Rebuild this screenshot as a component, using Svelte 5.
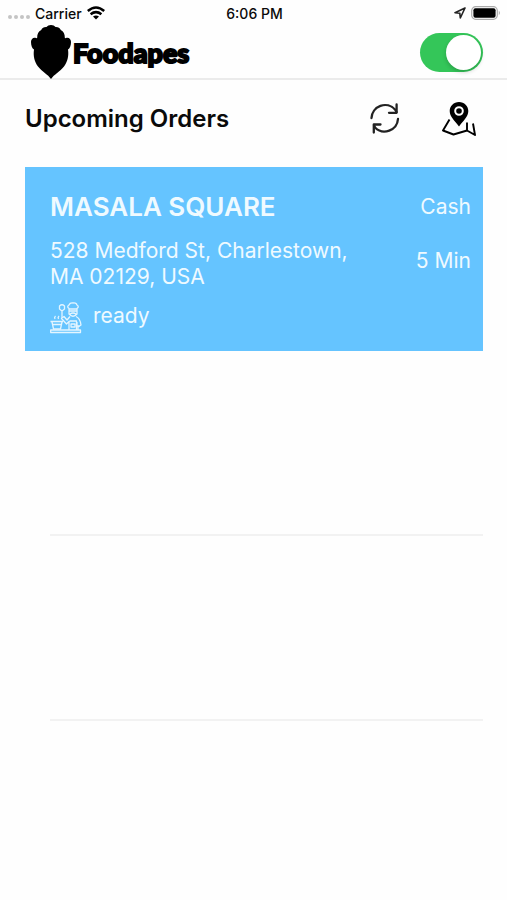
<script>
  let online = $state(true);

  const orders = [
    {
      id: 1,
      name: "MASALA SQUARE",
      address: "528 Medford St, Charlestown, MA 02129, USA",
      status: "ready",
      payment: "Cash",
      eta: "5 Min",
    },
  ];

  // empty table rows below the last order
  const emptyRows = [1, 2];
</script>

<div class="status-bar">
  <div class="carrier">
    <span class="dots"><i></i><i></i><i></i><i></i></span>
    <span>Carrier</span>
    <svg width="18" height="14" viewBox="0 0 18 14" aria-hidden="true">
      <g fill="none" stroke="#000" stroke-width="2.5">
        <path d="M0.8 5Q9-2 17.2 5" />
        <path d="M3.6 8.3Q9 4 14.4 8.3" />
      </g>
      <path d="M9 13.6L6 10.6Q9 8.4 12 10.6Z" />
    </svg>
  </div>
  <span class="time">6:06 PM</span>
  <div class="indicators">
    <svg width="12" height="12" viewBox="0 0 12 12" aria-hidden="true">
      <path
        d="M11 1L1 5.7L5.8 6.2L6.3 11Z"
        fill="none"
        stroke="#222"
        stroke-width="1.6"
        stroke-linejoin="round"
      />
    </svg>
    <svg width="30" height="14" viewBox="0 0 30 14" aria-hidden="true">
      <rect x="0.7" y="0.7" width="25.6" height="12.6" rx="4" fill="#fff" stroke="#aaa" stroke-width="1.2" />
      <rect x="2.4" y="2.2" width="22.2" height="9.6" rx="2" />
      <path d="M27.8 4.8Q30 7 27.8 9.2Z" fill="#aaa" />
    </svg>
  </div>
</div>

<header>
  <div class="logo">
    <svg width="42" height="54" viewBox="0 0 42 54" aria-hidden="true">
      <path
        d="M21 0C23 0 24.5 0.8 25.5 2C28 1.8 30 3 30.8 5C33.5 6.5 35 9 34.8 12.8L35.6 13.2C38.5 12 41 13.8 41 17C41 20.5 39.8 23.5 38 24.5C39 31 37.5 37 34 41.5C30 46.5 24 49.5 21 54C18 49.5 12 46.5 8 41.5C4.5 37 3 31 4 24.5C2.2 23.5 1 20.5 1 17C1 13.8 3.5 12 6.4 13.2L7.2 12.8C7 9 8.5 6.5 11.2 5C12 3 14 1.8 16.5 2C17.5 0.8 19 0 21 0Z"
      />
    </svg>
    <span>Foodapes</span>
  </div>
  <input class="switch" type="checkbox" role="switch" aria-label="Available for orders" bind:checked={online} />
</header>

<main>
  <div class="heading">
    <h1>Upcoming Orders</h1>
    <div class="actions">
      <button aria-label="Refresh orders">
        <svg width="34" height="34" viewBox="0 0 34 34" aria-hidden="true">
          <g fill="none" stroke="#222" stroke-width="2.3" stroke-linecap="round" stroke-linejoin="round">
            <path d="M3.5 16A13.5 13.5 0 0 1 27 7.5L28.5 10" />
            <path d="M28.6 2.5V10.8H21" />
            <path d="M30 17A13.5 13.5 0 0 1 7 25.5L6 23" />
            <path d="M5.8 30.5V22.5H12.5" />
          </g>
        </svg>
      </button>
      <button aria-label="Show map">
        <svg width="34" height="34" viewBox="0 0 34 34" aria-hidden="true">
          <path
            fill-rule="evenodd"
            d="M17 0C22.3 0 26.3 4 26.3 9C26.3 14.5 21.5 18.5 17 24.5C12.5 18.5 7.7 14.5 7.7 9C7.7 4 11.7 0 17 0ZM17 4.2A4.8 4.8 0 1 0 17 13.8A4.8 4.8 0 1 0 17 4.2Z"
          />
          <circle cx="17" cy="9" r="2.8" />
          <path
            d="M7.5 17.5L1 28.5L11.5 32.5L25 28.5L33 33L31 21.5M25 28.5V20.5"
            fill="none"
            stroke="#000"
            stroke-width="1.9"
            stroke-linejoin="round"
          />
        </svg>
      </button>
    </div>
  </div>

  <ul>
    {#each orders as order (order.id)}
      <li class="order">
        <div class="info">
          <h2>{order.name}</h2>
          <p>{order.address}</p>
          <div class="state">
            <svg width="32" height="32" viewBox="0 0 32 32" aria-hidden="true">
              <g fill="none" stroke="#e4f5ff" stroke-width="1.3" stroke-linejoin="round">
                <!-- counter -->
                <path d="M0.7 28H30.5V30.5H0.7Z" />
                <!-- pot and steam -->
                <path d="M0.5 19.5H13M2 20L3.5 27H10.5L12 20M2.5 22.5H11.5M5 17Q4 15.5 5.5 14M8.5 17Q7.5 15.5 9 14" />
                <!-- spoon -->
                <path d="M9.5 4Q12 1.5 14.5 4V7L12 9L9.5 7ZM12 9V16" />
                <!-- cook -->
                <path d="M19 6.5Q16.5 4.5 19 3Q20 0.5 23 1Q26.5 0.5 27 3Q29.5 4.5 27 6.5V12Q23 16.5 19 12ZM19 7H27M19 9H27M20 12Q23 10 26 12" />
                <path d="M20 14.5L17 18L14 14.5L11.5 16.5L16.5 22L19 19.5V28M26 14.5Q30 16 31 23L28 25V28M27 20V24L30 24M19.5 19H26.5V28M21 22H25V25H21Z" />
              </g>
            </svg>
            <span>{order.status}</span>
          </div>
        </div>
        <div class="meta">
          <span>{order.payment}</span>
          <span>{order.eta}</span>
        </div>
      </li>
    {/each}
    {#each emptyRows as row (row)}
      <li class="empty"></li>
    {/each}
  </ul>
</main>

<style>
  :global(body) {
    background-color: #fefefe;
    color: #0a0a0a;
    font-family: Inter, "Liberation Sans", sans-serif;
  }
  svg {
    display: block;
    flex: none;
  }
  .status-bar {
    display: grid;
    grid-template-columns: 1fr auto 1fr;
    align-items: center;
    height: 26px;
    padding: 0 6px 0 8px;
    font-size: 14px;
    font-weight: 500;
  }
  .carrier,
  .indicators {
    display: flex;
    align-items: center;
    gap: 5px;
  }
  .indicators {
    justify-content: flex-end;
  }
  .dots {
    display: flex;
    gap: 2px;
    padding-top: 8px;
  }
  .dots i {
    width: 4px;
    height: 4px;
    border-radius: 50%;
    background-color: #c4c4c4;
  }
  header {
    display: flex;
    align-items: center;
    justify-content: space-between;
    height: 52px;
    padding: 0 24px 0 30px;
    border-bottom: 2px solid #ebebeb;
  }
  .logo {
    display: flex;
    align-items: center;
    gap: 1px;
    font-family: Lato, sans-serif;
    font-size: 27px;
    font-weight: 900;
    color: #000;
  }
  .logo span {
    -webkit-text-stroke: 2px #000;
    paint-order: stroke fill;
  }
  .switch {
    appearance: none;
    display: flex;
    width: 63px;
    height: 39px;
    margin: 0;
    padding: 2px;
    box-sizing: border-box;
    border-radius: 20px;
    background-color: #ddd;
    cursor: pointer;
  }
  .switch::before {
    content: "";
    width: 35px;
    height: 35px;
    border-radius: 50%;
    background-color: #fff;
    box-shadow: 0 2px 4px rgba(0, 0, 0, 0.2);
  }
  .switch:checked {
    justify-content: flex-end;
    background-color: #34c659;
  }
  main {
    padding: 0 24px 0 25px;
  }
  .heading {
    display: flex;
    align-items: center;
    justify-content: space-between;
    height: 87px;
    padding-bottom: 10px;
    box-sizing: border-box;
  }
  h1 {
    margin: 0;
    font-size: 24px;
    font-weight: 600;
  }
  .actions {
    display: flex;
    gap: 40px;
    padding-right: 7px;
  }
  .actions button {
    appearance: none;
    padding: 0;
    border: 0;
    background-color: transparent;
    cursor: pointer;
  }
  ul {
    margin: 0;
    padding: 0;
    list-style: none;
  }
  .order {
    display: flex;
    justify-content: space-between;
    min-height: 184px;
    padding: 24px 12px 16px 25px;
    box-sizing: border-box;
    background-color: #65c4ff;
    color: #effaff;
    font-size: 21px;
    line-height: 26px;
  }
  .info {
    max-width: 320px;
  }
  h2 {
    margin: 0 0 15px;
    font-size: 26px;
    font-weight: 600;
    line-height: 32px;
  }
  p {
    margin: 0 0 12px;
  }
  .state {
    display: flex;
    align-items: center;
    gap: 11px;
  }
  .state span {
    padding-bottom: 4px;
  }
  .meta {
    display: flex;
    flex-direction: column;
    align-items: flex-end;
    gap: 28px;
    padding-top: 3px;
  }
  .empty {
    height: 183px;
    margin-left: 25px;
    border-bottom: 2px solid #f2f2f2;
  }
</style>
